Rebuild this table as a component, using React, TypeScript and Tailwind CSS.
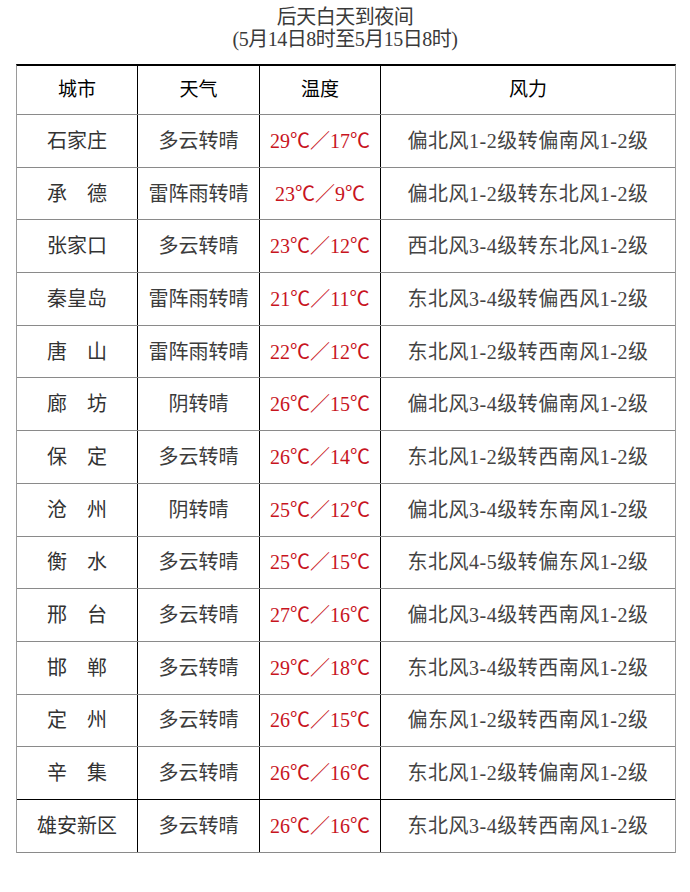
import React from 'react';

const rows: [string, string, string, string][] = [
    ['石家庄', '多云转晴', '29℃／17℃', '偏北风1-2级转偏南风1-2级'],
    ['承　德', '雷阵雨转晴', '23℃／9℃', '偏北风1-2级转东北风1-2级'],
    ['张家口', '多云转晴', '23℃／12℃', '西北风3-4级转东北风1-2级'],
    ['秦皇岛', '雷阵雨转晴', '21℃／11℃', '东北风3-4级转偏西风1-2级'],
    ['唐　山', '雷阵雨转晴', '22℃／12℃', '东北风1-2级转西南风1-2级'],
    ['廊　坊', '阴转晴', '26℃／15℃', '偏北风3-4级转偏南风1-2级'],
    ['保　定', '多云转晴', '26℃／14℃', '东北风1-2级转西南风1-2级'],
    ['沧　州', '阴转晴', '25℃／12℃', '偏北风3-4级转东南风1-2级'],
    ['衡　水', '多云转晴', '25℃／15℃', '东北风4-5级转偏东风1-2级'],
    ['邢　台', '多云转晴', '27℃／16℃', '偏北风3-4级转西南风1-2级'],
    ['邯　郸', '多云转晴', '29℃／18℃', '东北风3-4级转西南风1-2级'],
    ['定　州', '多云转晴', '26℃／15℃', '偏东风1-2级转西南风1-2级'],
    ['辛　集', '多云转晴', '26℃／16℃', '东北风1-2级转偏南风1-2级'],
    ['雄安新区', '多云转晴', '26℃／16℃', '东北风3-4级转西南风1-2级'],
];

const font = { fontFamily: '"Liberation Serif", "Noto Sans CJK SC", serif' };

export default function App() {
    return (
        <div className="w-[690px] h-[892px] bg-white" style={font}>
            <div className="pt-[6px] text-center text-[#3a3a3a] text-[20px] leading-[22px] tracking-[-0.5px]">
                <div>后天白天到夜间</div>
                <div>(5月14日8时至5月15日8时)</div>
            </div>
            <div className="mx-[16px] mt-[14px] w-[660px] border-t-2 border-t-black border-l border-l-[#9a9a9a] border-r border-r-[#9a9a9a]">
                <div className="grid grid-cols-[121px_122px_121px_1fr] h-[49px] border-b border-b-[#8a8a8a] text-black text-[19px]">
                    <div className="flex items-center justify-center border-r border-r-black">城市</div>
                    <div className="flex items-center justify-center border-r border-r-black">天气</div>
                    <div className="flex items-center justify-center border-r border-r-black">温度</div>
                    <div className="flex items-center justify-center">风力</div>
                </div>
                {rows.map(([city, weather, temp, wind], i) => (
                    <div
                        key={city}
                        className={`grid grid-cols-[121px_122px_121px_1fr] h-[52.7px] border-b text-[20px] ${
                            i === 12 ? 'border-b-black' : 'border-b-[#8a8a8a]'
                        }`}
                    >
                        <div className="flex items-center justify-center border-r border-r-black text-[#333]">{city}</div>
                        <div className="flex items-center justify-center border-r border-r-black text-[#3c3c3c]">{weather}</div>
                        <div className="flex items-center justify-center border-r border-r-black text-[#c8141e]">{temp}</div>
                        <div className="flex items-center justify-center text-[#444] tracking-[0.5px]">{wind}</div>
                    </div>
                ))}
            </div>
        </div>
    );
}
